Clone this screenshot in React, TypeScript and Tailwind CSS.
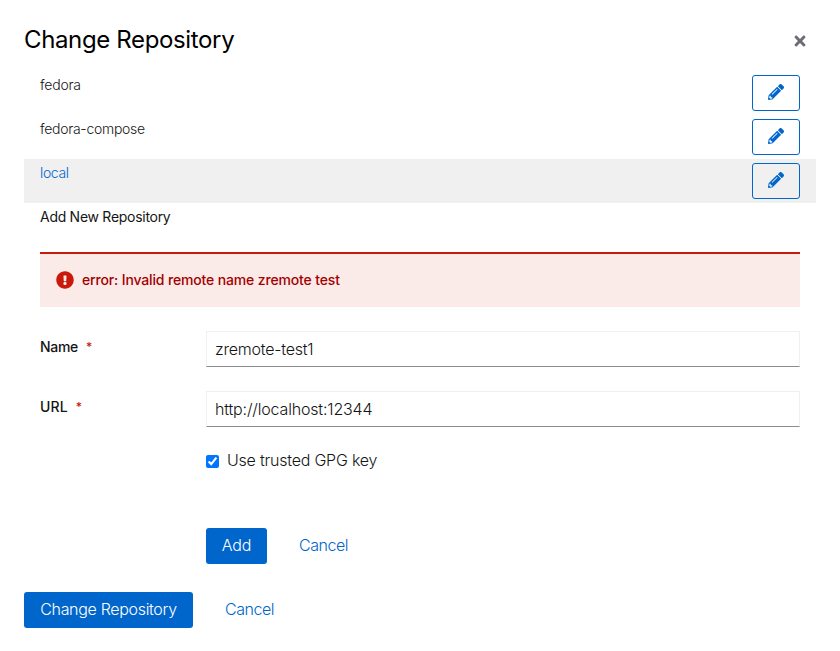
import type { ReactNode } from "react";
import { FaExclamationCircle, FaPencilAlt, FaTimes } from "react-icons/fa";

const repositories = [
  { name: "fedora", selected: false, spacing: "tracking-[-0.2px]" },
  { name: "fedora-compose", selected: false, spacing: "tracking-[-0.28px]" },
  { name: "local", selected: true, spacing: "tracking-[-0.35px]" },
];

function RepositoryRow({ name, selected, spacing }: { name: string; selected: boolean; spacing: string }) {
  return (
    <li className={`flex h-11 items-start justify-between px-4 py-1 ${selected ? "bg-[#f0f0f0]" : ""}`}>
      <span className={`text-sm leading-[19px] ${spacing} ${selected ? "text-[#0066cc]" : "text-[#151515]"}`}>{name}</span>
      <button aria-label={`Edit ${name}`} className="flex h-9 w-12 items-center justify-center rounded-[3px] border border-[#0066cc] pb-0.5 text-[#0066cc]">
        <FaPencilAlt size={16} />
      </button>
    </li>
  );
}

function Field({ label, value, labelSpacing, spacing }: { label: string; value: string; labelSpacing: string; spacing: string }) {
  return (
    <div className="flex h-9">
      <label className="flex w-[166px] shrink-0 pt-1.5 text-sm leading-[19px] font-medium text-[#151515]">
        <span className={labelSpacing}>{label}</span>
        <span className="ml-2 text-[12px] leading-[19px] text-[#c9190b]">*</span>
      </label>
      <input
        readOnly
        value={value}
        className={`h-9 min-w-0 flex-1 border border-[#f0f0f0] border-b-[#8a8d90] bg-white px-2 text-base text-[#151515] outline-none ${spacing}`}
      />
    </div>
  );
}

function PrimaryButton({ className, children }: { className: string; children: ReactNode }) {
  return (
    <button className={`h-9 rounded-[3px] bg-[#0066cc] pb-0.5 text-base leading-6 whitespace-nowrap text-white ${className}`}>{children}</button>
  );
}

function CancelButton() {
  return <button className="h-9 pb-0.5 text-base leading-6 tracking-[-0.45px] text-[#0066cc]">Cancel</button>;
}

export default function App() {
  return (
    <main className="flex h-[651px] w-[840px] flex-col bg-white px-6 font-['Inter','Liberation_Sans',sans-serif] font-light text-[#151515]">
      <header className="flex h-[71px] items-start justify-between pt-[23px] pr-2">
        <h1 className="text-2xl leading-[34px] font-normal tracking-[-0.36px] text-black">Change Repository</h1>
        <button aria-label="Close" className="pt-2.5 text-[#6a6e73]">
          <FaTimes size={16} />
        </button>
      </header>
      <ul>
        {repositories.map((repo) => (
          <RepositoryRow key={repo.name} {...repo} />
        ))}
      </ul>
      <section className="px-4">
        <h2 className="h-[49px] pt-1 text-sm leading-[19px] font-normal tracking-[-0.28px]">Add New Repository</h2>
        <div className="flex h-[55px] items-center border-t-2 border-[#c9190b] bg-[#faeae8] px-4">
          <FaExclamationCircle size={18} className="mb-px shrink-0 text-[#c9190b]" />
          <span className="ml-2 pb-0.5 text-sm leading-[21px] font-medium tracking-[-0.15px] text-[#a30000]">error: Invalid remote name zremote test</span>
        </div>
        <div className="mt-6 flex flex-col gap-6">
          <Field label="Name" value="zremote-test1" labelSpacing="tracking-[-0.3px]" spacing="tracking-[-0.22px]" />
          <Field label="URL" value="http://localhost:12344" labelSpacing="tracking-[0.1px]" spacing="tracking-[-0.17px]" />
        </div>
        <label className="mt-[21px] ml-[166px] flex h-6 items-center gap-2">
          <input type="checkbox" checked readOnly className="mt-[3px] h-[13px] w-[13px]" />
          <span className="text-base leading-6 tracking-[-0.22px]">Use trusted GPG key</span>
        </label>
        <div className="mt-14 ml-[166px] flex gap-8">
          <PrimaryButton className="w-[61px] tracking-[-0.2px]">Add</PrimaryButton>
          <CancelButton />
        </div>
      </section>
      <footer className="mt-7 flex gap-8">
        <PrimaryButton className="w-[169px] tracking-[-0.32px]">Change Repository</PrimaryButton>
        <CancelButton />
      </footer>
    </main>
  );
}
